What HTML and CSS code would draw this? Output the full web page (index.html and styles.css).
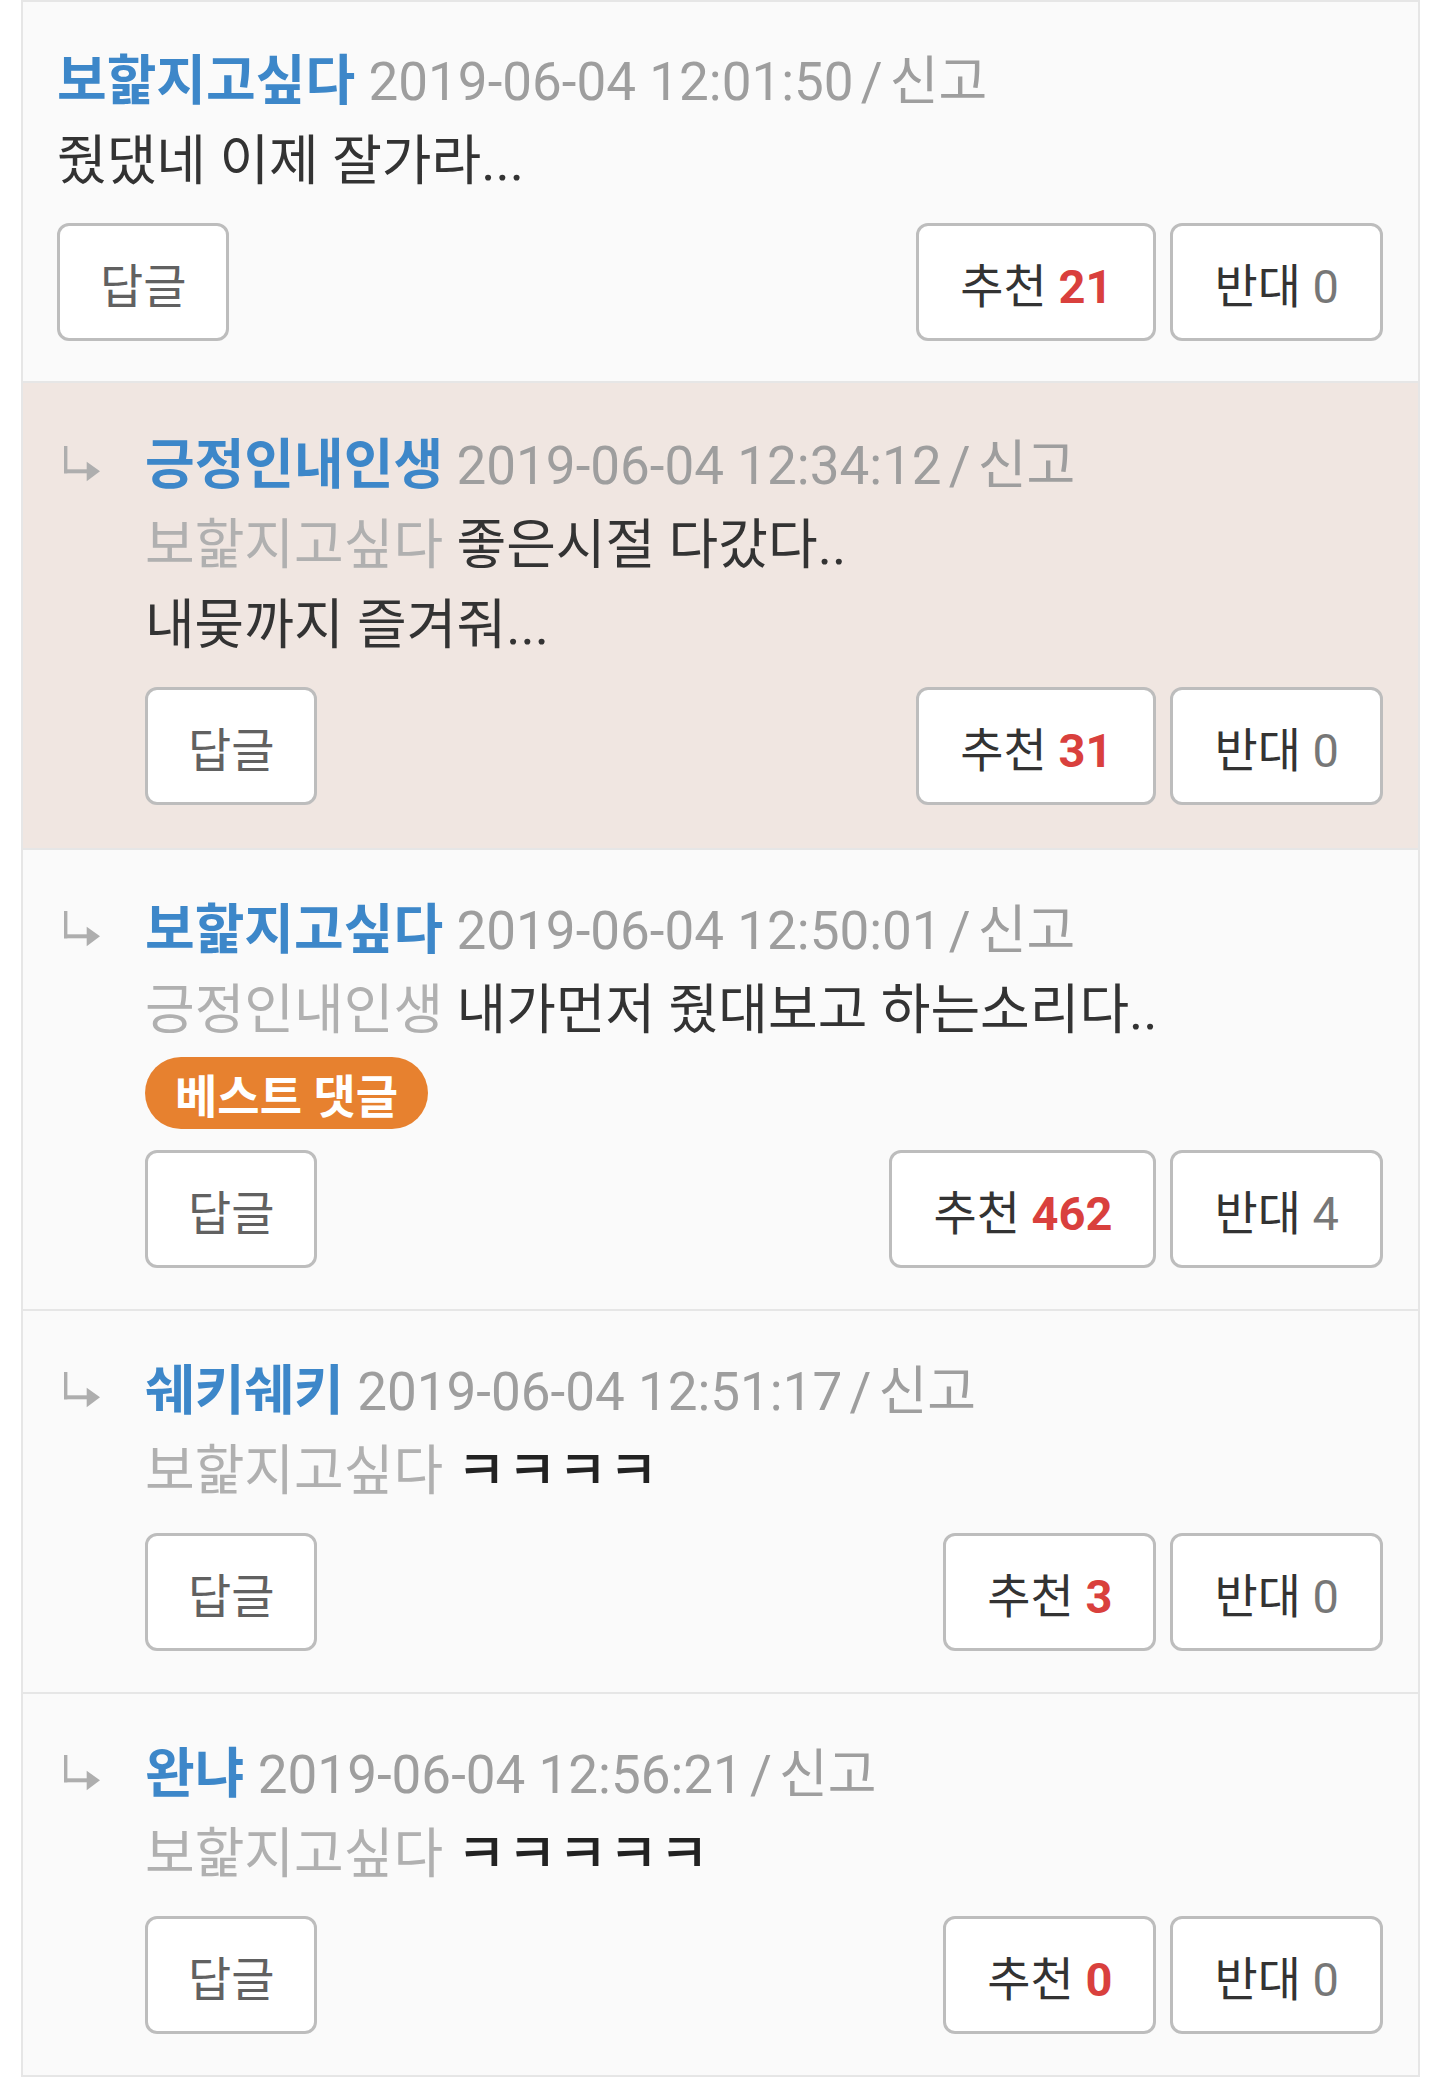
FILE: index.html
```html
<!DOCTYPE html>
<html lang="ko">
<head>
<meta charset="utf-8">
<title>댓글</title>
<link rel="stylesheet" href="styles.css">
</head>
<body>
<div class="comments">

  <div class="comment first">
    <div class="c-body">
      <p class="line meta"><span class="nick">보핥지고싶다</span> <span class="date">2019-06-04 12:01:50<span class="sep"> / </span>신고</span></p>
      <p class="line text">줬댔네 이제 잘가라...</p>
      <div class="actions">
        <button class="btn btn-reply">답글</button>
        <div class="votes">
          <button class="btn">추천 <b class="up">21</b></button>
          <button class="btn">반대 <span class="down">0</span></button>
        </div>
      </div>
    </div>
  </div>

  <div class="comment reply highlight">
    <svg class="arrow" viewBox="0 0 40 40" width="40" height="40"><rect x="2" y="2" width="3.4" height="27.3" /><rect x="2" y="25.3" width="25" height="4" /><polygon points="24.7,17.8 38,27.3 24.7,37.3" /></svg>
    <div class="c-body">
      <p class="line meta"><span class="nick">긍정인내인생</span> <span class="date">2019-06-04 12:34:12<span class="sep"> / </span>신고</span></p>
      <p class="line text"><span class="mention">보핥지고싶다</span> 좋은시절 다갔다..</p>
      <p class="line text">내뭊까지 즐겨줘...</p>
      <div class="actions">
        <button class="btn btn-reply">답글</button>
        <div class="votes">
          <button class="btn">추천 <b class="up">31</b></button>
          <button class="btn">반대 <span class="down">0</span></button>
        </div>
      </div>
    </div>
  </div>

  <div class="comment reply">
    <svg class="arrow" viewBox="0 0 40 40" width="40" height="40"><rect x="2" y="2" width="3.4" height="27.3" /><rect x="2" y="25.3" width="25" height="4" /><polygon points="24.7,17.8 38,27.3 24.7,37.3" /></svg>
    <div class="c-body">
      <p class="line meta"><span class="nick">보핥지고싶다</span> <span class="date">2019-06-04 12:50:01<span class="sep"> / </span>신고</span></p>
      <p class="line text"><span class="mention">긍정인내인생</span> 내가먼저 줬대보고 하는소리다..</p>
      <div class="badge-row"><span class="badge">베스트 댓글</span></div>
      <div class="actions">
        <button class="btn btn-reply">답글</button>
        <div class="votes">
          <button class="btn">추천 <b class="up">462</b></button>
          <button class="btn">반대 <span class="down">4</span></button>
        </div>
      </div>
    </div>
  </div>

  <div class="comment reply">
    <svg class="arrow" viewBox="0 0 40 40" width="40" height="40"><rect x="2" y="2" width="3.4" height="27.3" /><rect x="2" y="25.3" width="25" height="4" /><polygon points="24.7,17.8 38,27.3 24.7,37.3" /></svg>
    <div class="c-body">
      <p class="line meta"><span class="nick">쉐키쉐키</span> <span class="date">2019-06-04 12:51:17<span class="sep"> / </span>신고</span></p>
      <p class="line text"><span class="mention">보핥지고싶다</span> <span class="kk">ㅋㅋㅋㅋ</span></p>
      <div class="actions">
        <button class="btn btn-reply">답글</button>
        <div class="votes">
          <button class="btn">추천 <b class="up">3</b></button>
          <button class="btn">반대 <span class="down">0</span></button>
        </div>
      </div>
    </div>
  </div>

  <div class="comment reply">
    <svg class="arrow" viewBox="0 0 40 40" width="40" height="40"><rect x="2" y="2" width="3.4" height="27.3" /><rect x="2" y="25.3" width="25" height="4" /><polygon points="24.7,17.8 38,27.3 24.7,37.3" /></svg>
    <div class="c-body">
      <p class="line meta"><span class="nick">완냐</span> <span class="date">2019-06-04 12:56:21<span class="sep"> / </span>신고</span></p>
      <p class="line text"><span class="mention">보핥지고싶다</span> <span class="kk">ㅋㅋㅋㅋㅋ</span></p>
      <div class="actions">
        <button class="btn btn-reply">답글</button>
        <div class="votes">
          <button class="btn">추천 <b class="up">0</b></button>
          <button class="btn">반대 <span class="down">0</span></button>
        </div>
      </div>
    </div>
  </div>

</div>
</body>
</html>
```

FILE: styles.css
```css
* { box-sizing: border-box; }

html, body {
  margin: 0;
  padding: 0;
  background: #ffffff;
}

body {
  font-family: Roboto, "Noto Sans CJK KR", sans-serif;
  color: #333333;
}

.comments {
  margin: 0 20px 0 21px;
  border: 2px solid #e6e6e6;
  background: #fafafa;
}

.comment {
  display: flex;
  padding: 41px 35px 41px 34px;
  background: #fafafa;
}

.comment.first {
  padding-top: 40px;
  padding-bottom: 40px;
}

.comment + .comment {
  border-top: 2px solid #e6e6e6;
}

.comment.highlight {
  background: #f0e6e1;
  padding-top: 43px;
  padding-bottom: 43px;
}

.arrow {
  flex: 0 0 auto;
  width: 40px;
  height: 40px;
  margin: 18px 43px 0 5px;
  fill: #aeaeae;
}

.c-body {
  flex: 1 1 auto;
  min-width: 0;
}

.line {
  margin: 0;
  font-size: 54px;
  line-height: 80px;
  white-space: nowrap;
}

.nick {
  color: #3d87c9;
  font-weight: 700;
}

.date {
  color: #9e9e9e;
  font-size: 53px;
}

.sep {
  word-spacing: -6px;
}

.text {
  color: #333333;
}

.mention {
  color: #b0b0b0;
}

.kk {
  letter-spacing: 1px;
  font-weight: 500;
  color: #222222;
}

.badge-row {
  display: flex;
  margin: 6px 0 2px;
}

.badge {
  display: inline-flex;
  align-items: center;
  height: 72px;
  padding: 0 30px;
  border-radius: 36px;
  background: #e7812f;
  color: #ffffff;
  font-size: 46px;
  font-weight: 700;
}

.actions {
  display: flex;
  justify-content: space-between;
  align-items: center;
  margin-top: 21px;
}

.votes {
  display: flex;
  gap: 14px;
}

.btn {
  height: 118px;
  padding: 0 41px;
  border: 3px solid #bdbdbd;
  border-radius: 12px;
  background: #ffffff;
  font-family: Roboto, "Noto Sans CJK KR", sans-serif;
  font-size: 47px;
  color: #333333;
  white-space: nowrap;
}

.btn-reply {
  padding: 0 40px;
  color: #616161;
}

.up {
  color: #d9403d;
  font-weight: 700;
}

.down {
  color: #777777;
}
```
